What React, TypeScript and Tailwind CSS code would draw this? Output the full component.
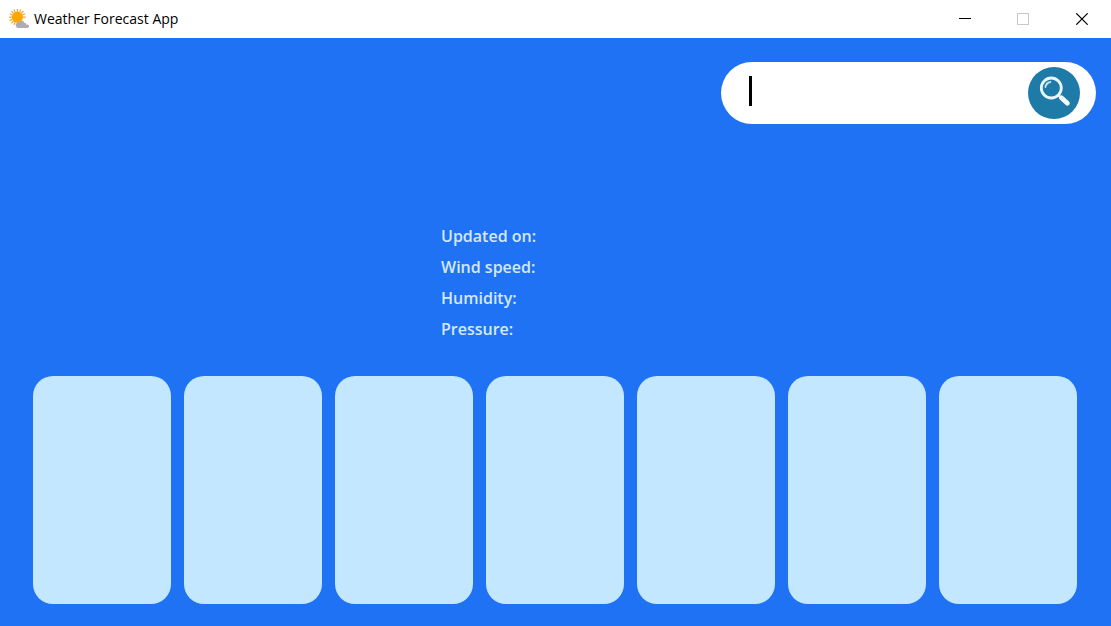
import { useState } from "react";

const details = ["Updated on:", "Wind speed:", "Humidity:", "Pressure:"];
const days = ["Day 1", "Day 2", "Day 3", "Day 4", "Day 5", "Day 6", "Day 7"];

function WeatherLogo() {
  return (
    <svg width="20" height="20" viewBox="0 0 20 20" aria-hidden="true">
      <g stroke="#eda526" strokeWidth="1.2" strokeLinecap="round">
        <path d="M8.4 .2v2M8.4 14.4v1.8M.4 8.2h2M14.4 8.2h2M2.7 2.5l1.4 1.4M14.1 2.5l-1.4 1.4M2.7 13.9l1.4-1.4M5.2 .9l.7 1.8M11.6 .9l-.7 1.8M1.1 5l1.8.8M15.7 5l-1.8.8M1.1 11.4l1.8-.8M5.2 15.5l.7-1.8" />
      </g>
      <circle cx="8.4" cy="8.2" r="5.6" fill="#ffa502" />
      <path
        d="M9.4 19a2.8 2.8 0 0 1-1.6-5 2.6 2.6 0 0 1 2.2-.9 3 3 0 0 1 5.4.6 2.2 2.2 0 0 1 2 2.4A1.5 1.5 0 0 1 19.6 18.2 1.2 1.2 0 0 1 18.6 19z"
        fill="#acacb4"
      />
    </svg>
  );
}

function TitleBar() {
  return (
    <header className="flex h-[38px] shrink-0 items-center bg-white pl-[9px]">
      <WeatherLogo />
      <h1 className="ml-[5px] grow font-['Open_Sans',sans-serif] text-sm text-black">
        Weather Forecast App
      </h1>
      <button type="button" aria-label="Minimize" className="flex h-full w-[58px] items-center justify-center">
        <svg width="12" height="12" viewBox="0 0 12 12" shapeRendering="crispEdges">
          <path d="M0 5.5h12" stroke="#000" />
        </svg>
      </button>
      <button type="button" aria-label="Maximize" disabled className="flex h-full w-[58px] items-center justify-center">
        <svg width="12" height="12" viewBox="0 0 12 12" shapeRendering="crispEdges">
          <path d="M.5.5h11v11H.5z" fill="none" stroke="#c8c8c8" />
        </svg>
      </button>
      <button type="button" aria-label="Close" className="flex h-full w-[59px] items-center justify-center">
        <svg width="13" height="12" viewBox="0 0 13 12">
          <path d="M1.3.3l11.4 11.4M12.7.3L1.3 11.7" stroke="#000" strokeWidth="1.2" />
        </svg>
      </button>
    </header>
  );
}

function SearchBar() {
  const [city, setCity] = useState("");
  return (
    <form
      role="search"
      onSubmit={(event) => event.preventDefault()}
      className="relative flex h-[62px] w-[375px] items-center rounded-full bg-white pr-4 pl-7"
    >
      <input
        type="text"
        aria-label="City"
        value={city}
        onChange={(event) => setCity(event.target.value)}
        className="h-10 min-w-0 grow bg-transparent font-['Open_Sans',sans-serif] text-2xl outline-none"
      />
      {city === "" && (
        <span aria-hidden="true" className="pointer-events-none absolute top-3.5 left-7 h-[30px] w-[3px] bg-black" />
      )}
      <button type="submit" aria-label="Search" className="size-[52px] shrink-0 rounded-full bg-[#1e7ba8]">
        <svg width="52" height="52" viewBox="0 0 52 52" fill="none">
          <circle cx="23.3" cy="21" r="10" stroke="#e8f5fa" strokeWidth="2.8" />
          <path d="M17.4 20a6.2 6.2 0 0 1 5-5" stroke="#c5e2ee" strokeWidth="1.8" strokeLinecap="round" />
          <path d="M30.2 28l3 3" stroke="#e8f5fa" strokeWidth="2.4" />
          <path d="M33.4 30.8l6 5.4" stroke="#f4fbfd" strokeWidth="4.8" strokeLinecap="round" />
        </svg>
      </button>
    </form>
  );
}

export default function App() {
  return (
    <div className="flex min-h-screen flex-col bg-[#1f72f3]">
      <TitleBar />
      <main className="flex grow flex-col">
        <div className="flex justify-end pt-6 pr-[15px]">
          <SearchBar />
        </div>
        <ul className="mt-[97px] ml-[441px] font-['Open_Sans',sans-serif] text-base font-semibold text-[#d5e8fc]">
          {details.map((label) => (
            <li key={label} className="leading-[31px]">
              {label}
            </li>
          ))}
        </ul>
        <section
          aria-label="Seven day forecast"
          className="mt-[31px] mr-[34px] mb-[22px] ml-[33px] grid grow grid-cols-7 gap-[13px]"
        >
          {days.map((day) => (
            <article key={day} aria-label={day} className="rounded-[20px] bg-[#c2e7ff]" />
          ))}
        </section>
      </main>
    </div>
  );
}
